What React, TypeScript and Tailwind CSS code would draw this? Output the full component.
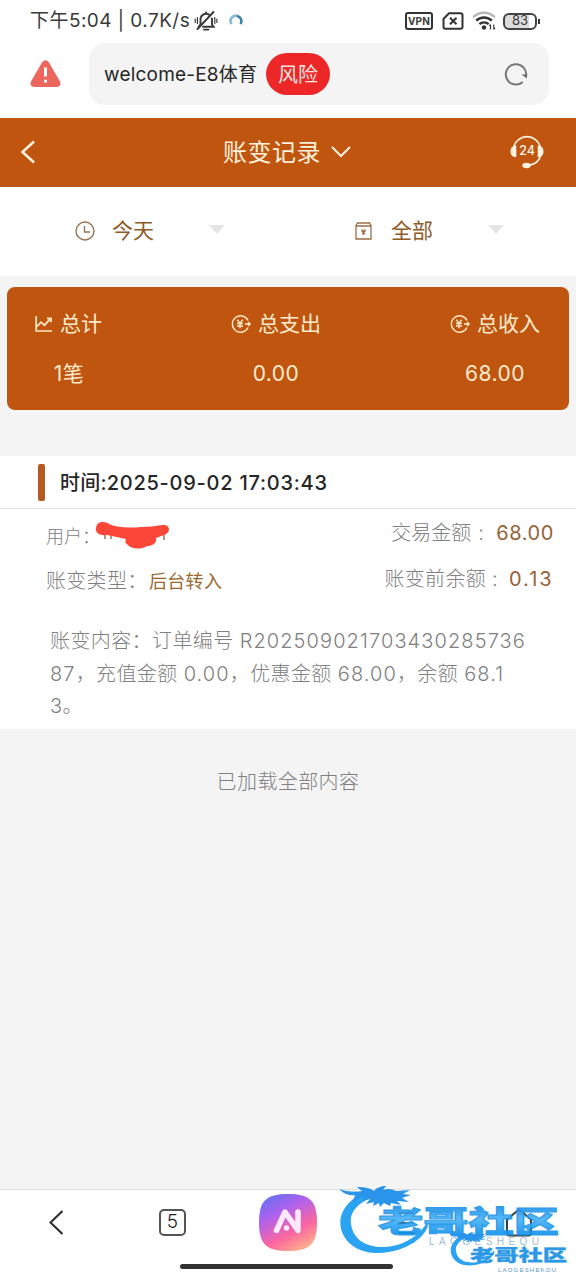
import type { ReactNode } from 'react';

interface SummaryItem {
  title: string;
  value: string;
  icon: ReactNode;
  className: string;
}

function BellOffIcon() {
  return (
    <svg className="w-6 h-[22px]" viewBox="0 0 24 22" fill="none" stroke="#3a3a3a" strokeWidth="1.9" strokeLinecap="round">
      <path d="M6.5 14.5V9.3a5.6 5.6 0 0 1 9-4.4M18 8.5v6l1.6 2.3H9M12 2.4v.8M10 19.6h4.5" />
      <path d="M3.5 19L19.5 2M4.6 16.8l1.9-2.3" />
      <path d="M1.2 9v3.500M3.400 7.500v6M20.800 7.500v6M22.900 9v3.500" strokeWidth="1.2" />
    </svg>
  );
}

function WifiIcon() {
  return (
    <svg className="w-6 h-5" viewBox="0 0 24 20" fill="none" stroke="#333" strokeWidth="2.4">
      <path d="M1.2 6.2a15.5 15.5 0 0 1 21.6 0" stroke="#b5b5b5" />
      <path d="M4.2 9.700a11 11 0 0 1 15.6 0M7.400 13.200a6.600 6.600 0 0 1 9.200 0" />
      <circle cx="12" cy="16.5" r="2.200" fill="#333" stroke="none" />
      <path d="M18.500 13.500v5M21.800 13.500v5M17.300 15l1.200-1.500M23 17l-1.200 1.500" strokeWidth="1.2" />
    </svg>
  );
}

function HeadsetIcon() {
  return (
    <svg className="w-[34px] h-[34px]" viewBox="0 0 34 34" fill="none" stroke="#fff3e0" strokeWidth="1.7">
      <path d="M3.5 12a14 14 0 0 1 27 0M30.5 21c-1.500 5-5.500 8.300-11.500 9.200" />
      <path d="M6.300 10.800v11.400C2.500 22.200.5 20 .5 16.500S2.500 10.800 6.300 10.800zM27.700 10.800v11.400c3.800 0 5.800-2.200 5.800-5.700S31.500 10.800 27.700 10.800z" fill="#fff3e0" stroke="none" />
      <ellipse cx="16.5" cy="30.500" rx="4.200" ry="2.700" fill="#fff3e0" stroke="none" />
      <text x="17" y="20" textAnchor="middle" fontSize="12.500" fontWeight="500" fill="#fff3e0" stroke="none" fontFamily="Inter, sans-serif">24</text>
    </svg>
  );
}

function TrendIcon() {
  return (
    <svg className="w-[18px] h-[18px]" viewBox="0 0 18 18" fill="none" stroke="#ffe9c4" strokeWidth="1.700">
      <path d="M1.200 1v15H17M2 11.500l4-4.300 3.500 3 6-6.500M12 3.300h4v4" />
    </svg>
  );
}

function YenIcon() {
  return (
    <svg className="w-5 h-[18px]" viewBox="0 0 20 18" fill="none" stroke="#ffe9c4" strokeWidth="1.400">
      <path d="M17 5.500A8.200 8.200 0 1 0 17 12.500M14 9h5.200M17 7l2.200 2L17 11" />
      <path d="M6.200 4.800L9 8.300l2.800-3.500M9 8.300v5M6 8.500h6M6 11h6" />
    </svg>
  );
}

function Dragon() {
  return (
    <>
      <path
        d="M27 6C8 13-3 30 3 46c8 20 30 23 47 20 19-3 35-14 39-26l-1-3C78 52 62 60 47 61 28 62 14 54 12 38 10 27 18 17 33 12z"
        fill="#139af1"
      />
      <path
        d="M0 3c9 3 17 3 23 2l-5-4c8 0 13 1 17 4 2-3 7-5 12-5l-3 4c5-2 9-1 13 1l14-1-7 4 8 1-9 3 7 4-12-1 4 4-10-2-1 3-6-3-4 4-1-4-6 3 1-4-8 2 4-5-7 1 2-4c-4 1-8 3-12 6l2-7C10 10 5 8 0 3z"
        fill="#1289e8"
      />
    </>
  );
}

function Watermark() {
  return (
    <svg className="absolute left-[336px] top-[1180px] w-[240px] h-[100px] opacity-90" viewBox="0 0 240 100" fontFamily="'Noto Sans CJK SC', sans-serif">
      <defs>
        <linearGradient id="ink" x1="0" y1="0" x2="0" y2="1">
          <stop offset=".15" stopColor="#1388e2" />
          <stop offset=".5" stopColor="#45b2f8" />
          <stop offset=".85" stopColor="#0c91ec" />
        </linearGradient>
      </defs>
      <g transform="translate(3 6)">
        <Dragon />
      </g>
      <g transform="translate(42 52) scale(1 .68)">
        <text textLength="181" lengthAdjust="spacingAndGlyphs" fontSize="43" fontWeight="900" fill="url(#ink)" stroke="#1a93e8" strokeWidth="1.4">老哥社区</text>
      </g>
      <text x="93" y="65" textLength="110" fontSize="10" fill="#94b9d2" fontFamily="Liberation Sans, sans-serif">LAOGESHEQU</text>
      <g transform="translate(114 52) scale(.5)">
        <Dragon />
      </g>
      <g transform="translate(134 81) scale(1 .7)">
        <text textLength="97" lengthAdjust="spacingAndGlyphs" fontSize="23" fontWeight="900" fill="#168fe4" stroke="#168fe4" strokeWidth=".5">老哥社区</text>
      </g>
      <text x="162" y="92" textLength="58" fontSize="6" fill="#3f8dc4" fontFamily="Liberation Sans, sans-serif">LAOGESHEKOU</text>
    </svg>
  );
}

function StatusBar() {
  return (
    <div className="flex items-center h-[42px] pl-[30px] pr-[36px] text-[#3a3a3a]">
      <span className="w-[164px] pt-px text-[19px] tracking-[0.45px] whitespace-nowrap">下午5:04 | 0.7K/s</span>
      <BellOffIcon />
      <svg className="w-[14px] h-[14px] ml-[11px]" viewBox="0 0 14 14" fill="none" strokeWidth="2.600">
        <path d="M2.600 10A5.200 5.200 0 0 1 9 2.200" stroke="#89b9d8" />
        <path d="M8 2a5.200 5.200 0 0 1 3.500 8" stroke="#3e7fa8" />
      </svg>
      <div className="flex items-center ml-auto">
        <span className="flex items-center justify-center w-7 h-[18px] border-2 border-[#333] rounded-[3px] text-[10px] font-bold tracking-[0.2px]">VPN</span>
        <svg className="w-[22px] h-[18px] ml-[9px]" viewBox="0 0 22 18" fill="none" stroke="#333" strokeWidth="2">
          <path d="M7 1.200h11.500a2 2 0 0 1 2 2v11.500a2 2 0 0 1-2 2h-15a2 2 0 0 1-2-2V7z" />
          <path d="M8 5.700l6.500 6.600M14.500 5.700L8 12.300" />
        </svg>
        <div className="ml-2">
          <WifiIcon />
        </div>
        <span className="flex items-center justify-center w-[34px] h-[17px] ml-[7px] border-2 border-[#444] rounded-[6px] bg-linear-to-r from-[#dcdcdc] from-80% to-white to-80% text-[13px]">83</span>
        <span className="w-[2px] h-[5px] ml-[1px] bg-[#333]" />
      </div>
    </div>
  );
}

function AddressBar() {
  return (
    <div className="flex h-[76px] pl-[30px] pr-[26px] pt-px">
      <svg className="w-[31px] h-[28px] mt-[17px]" viewBox="0 0 31 28">
        <path d="M12 2.500q3.500-4.500 7 0L30 21.500q2 5-4 5.500H5q-6-.5-4-5.500z" fill="#ec665e" />
        <path d="M15.500 7.500v9M15.500 19.800v2.700" stroke="#fff" strokeWidth="3" />
      </svg>
      <div className="flex items-center w-[460px] h-[62px] ml-[28px] pl-[15px] pr-[21px] rounded-[16px] bg-[#f4f4f4]">
        <span className="w-[162px] pt-[2px] text-[19px] tracking-[0.2px] text-[#262626] whitespace-nowrap">welcome-E8体育</span>
        <span className="flex items-center justify-center w-16 h-[42px] pt-px rounded-full bg-[#ed2727] text-[20px] text-[#ffe5e0]">风险</span>
        <svg className="w-6 h-6 ml-auto" viewBox="0 0 24 24" fill="none" stroke="#777" strokeWidth="2">
          <path d="M18.800 20A10.200 10.200 0 1 1 22 14.500" />
          <path d="M17.500 12.500h5.500v4z" fill="#666" stroke="none" />
        </svg>
      </div>
    </div>
  );
}

function Header() {
  return (
    <header className="flex items-center h-[69px] pl-[20px] pr-[32px] pb-px bg-[#c05510] text-[#fff1dc]">
      <svg className="w-4 h-6" viewBox="0 0 16 24" fill="none" stroke="#fff3e2" strokeWidth="2.500">
        <path d="M14 1.500L2.500 12 14 22.500" />
      </svg>
      <h1 className="ml-[187px] pt-px text-[24px] tracking-[0.5px] font-normal">账变记录</h1>
      <svg className="w-5 h-3 ml-[10px]" viewBox="0 0 20 12" fill="none" stroke="#fff3e2" strokeWidth="2">
        <path d="M1 1l9 9 9-9" />
      </svg>
      <div className="ml-auto">
        <HeadsetIcon />
      </div>
    </header>
  );
}

function Filters() {
  return (
    <div className="flex items-center h-[89px] pl-[75px] pb-[2px] bg-white text-[21px] text-[#8e5a25]">
      <svg className="w-5 h-5" viewBox="0 0 20 20" fill="none" stroke="#9a7352" strokeWidth="1.400">
        <circle cx="10" cy="10" r="9" />
        <path d="M9.500 5v6H15" />
      </svg>
      <span className="w-[43px] ml-[17px]">今天</span>
      <span className="ml-[54px] mb-[3px] border-x-8 border-x-transparent border-t-[9px] border-t-[#e5e5e5]" />
      <svg className="w-[17px] h-[18px] ml-[130px]" viewBox="0 0 17 18" fill="none" stroke="#9a6e45" strokeWidth="1.300">
        <path d="M1 3.500V17h15V3.500L14.500 1h-12zM1 4h15" />
        <path d="M6.500 7.500L8.500 9.500l2-2M8.500 9v4M6.500 9.500h4M7 11.300h3" />
      </svg>
      <span className="w-[43px] ml-[19px]">全部</span>
      <span className="ml-[54px] mb-[3px] border-x-8 border-x-transparent border-t-[9px] border-t-[#e5e5e5]" />
    </div>
  );
}

const summary: SummaryItem[] = [
  { title: '总计', value: '1笔', icon: <TrendIcon />, className: 'w-[68px]' },
  { title: '总支出', value: '0.00', icon: <YenIcon />, className: 'w-[90px] ml-[128px]' },
  { title: '总收入', value: '68.00', icon: <YenIcon />, className: 'w-[90px] ml-[129px]' },
];

function Summary() {
  return (
    <section className="flex h-[123px] mx-[7px] mt-[11px] pl-[28px] pt-[22px] rounded-lg bg-[#c05510] text-[#ffebcd]">
      {summary.map((item) => (
        <div key={item.title} className={item.className}>
          <div className="flex items-center gap-[7px] h-[30px] text-[21px] whitespace-nowrap">
            <span className="shrink-0">{item.icon}</span>
            {item.title}
          </div>
          <p className="h-[30px] mt-5 leading-[30px] text-[21px] text-center tracking-[0.5px]">{item.value}</p>
        </div>
      ))}
    </section>
  );
}

function Record() {
  return (
    <section className="h-[273px] mt-[46px] bg-white font-light text-[#808080]">
      <div className="flex items-center h-[53px] pl-[38px] border-b border-[#e4e4e4]">
        <span className="w-[7px] h-[37px] rounded-[2px] bg-[#b55a20]" />
        <span className="ml-[15px] pt-px text-[20px] font-medium tracking-[0.2px] text-[#262626]">
          时间:<span className="tracking-[0.75px]">2025-09-02 17:03:43</span>
        </span>
      </div>
      <div className="flex justify-between pl-[46px] pr-[22px]">
        <div>
          <div className="flex items-center h-[46px] pt-[8px] text-[18px]">
            用户：
            <svg className="w-[75px] h-[28px] -ml-[5px]" viewBox="0 0 75 28">
              <path d="M10 11v6M16 13v4M69 12v6" stroke="#7e5437" strokeWidth="1.2" />
              <path d="M1 6C2-1 9-1 14 2c9 4 20 4 32 3 8 0 14-1 21-2 9-1 9 8 2 10l-8 3c1 5-3 8-9 8-6 4-16 3-19-1-3-2-3-4-2-6L12 13C5 14 0 11 1 6z" fill="#fb4638" />
            </svg>
          </div>
          <div className="flex items-center h-[46px] pt-[6px] text-[20px]">
            <span className="w-[103px] tracking-[0.3px] whitespace-nowrap">账变类型：</span>
            <span className="text-[18px] font-normal tracking-[0.3px] text-[#9b6930]">后台转入</span>
          </div>
        </div>
        <div className="text-[20px]">
          <div className="flex items-center justify-end h-[46px] pt-[2px]">
            交易金额<span className="w-[25px] pl-[7px]">:</span>
            <span className="font-normal tracking-[0.6px] text-[#966237]">68.00</span>
          </div>
          <div className="flex items-center justify-end h-[46px] pt-[2px]">
            <span className="tracking-[0.3px]">账变前余额</span>
            <span className="w-[23px] pl-[6px]">:</span>
            <span className="w-[45px] font-normal tracking-[2px] text-[#966237]">0.13</span>
          </div>
        </div>
      </div>
      <p className="mt-[24px] ml-[50px] text-[20px] leading-[32.5px] tracking-[0.4px] whitespace-nowrap">
        账变内容：订单编号 <span className="tracking-[1.1px]">R202509021703430285736</span>
        <br />
        <span className="tracking-[1.1px]">87</span>，充值金额 <span className="tracking-[1.1px]">0.00</span>，优惠金额 <span className="tracking-[1.1px]">68.00</span>，余额 <span className="tracking-[1.1px]">68.1</span>
        <br />
        3。
      </p>
    </section>
  );
}

function BottomNav() {
  return (
    <nav className="h-[91px] border-t border-[#dedede] bg-white">
      <div className="flex items-center h-[65px] pl-[49px]">
        <svg className="w-[15px] h-[25px]" viewBox="0 0 15 25" fill="none" stroke="#303030" strokeWidth="2.200">
          <path d="M13.500 1L1.500 12.500l12 11.500" />
        </svg>
        <span className="flex items-center justify-center w-[27px] h-[27px] ml-[95px] border-2 border-[#555] rounded-[5px] text-[19px] font-light text-[#222]">5</span>
        <svg className="w-[58px] h-[57px] ml-[73px]" viewBox="0 0 58 57">
          <defs>
            <linearGradient id="ai" x1=".2" y1="0" x2=".75" y2="1">
              <stop offset="0" stopColor="#6670ee" />
              <stop offset=".3" stopColor="#ad61ef" />
              <stop offset=".68" stopColor="#fb669f" />
              <stop offset="1" stopColor="#ffb38a" />
            </linearGradient>
          </defs>
          <path d="M29 0c22 0 29 7 29 28.500S51 57 29 57 0 50 0 28.500 7 0 29 0z" fill="url(#ai)" />
          <path d="M17.500 36.500L26 18l13 18.500V18" fill="none" stroke="#ffe9fa" strokeWidth="5.500" strokeLinecap="round" strokeLinejoin="round" />
          <circle cx="27.500" cy="34" r="2.700" fill="#ffe9fa" />
        </svg>
        <svg className="w-[18px] h-[22px] ml-[80px]" viewBox="0 0 18 22" stroke="#555" strokeWidth="1.800">
          <path d="M1 1h16M1 11h16M1 21h16" />
        </svg>
        <svg className="w-7 h-[28px] ml-[90px]" viewBox="0 0 28 28" fill="none" stroke="#3c3c3c" strokeWidth="2">
          <path d="M2 10.500L11.500 2.500q2.500-2 5 0L26 10.500V24q0 2.500-2.500 2.500h-19Q2 26.500 2 24z" />
        </svg>
      </div>
      <div className="w-[213px] h-[5px] mt-[9px] ml-[180px] rounded-full bg-[#333]" />
    </nav>
  );
}

export default function App() {
  return (
    <div className="relative flex flex-col w-[576px] h-[1280px] overflow-hidden bg-[#f4f4f4] font-['Inter','Noto_Sans_CJK_SC',sans-serif]">
      <div className="bg-white">
        <StatusBar />
        <AddressBar />
      </div>
      <Header />
      <Filters />
      <Summary />
      <Record />
      <p className="mt-[38px] text-center text-[20px] leading-[30px] tracking-[0.4px] font-light text-[#808080]">已加载全部内容</p>
      <div className="mt-auto">
        <BottomNav />
      </div>
      <Watermark />
    </div>
  );
}
